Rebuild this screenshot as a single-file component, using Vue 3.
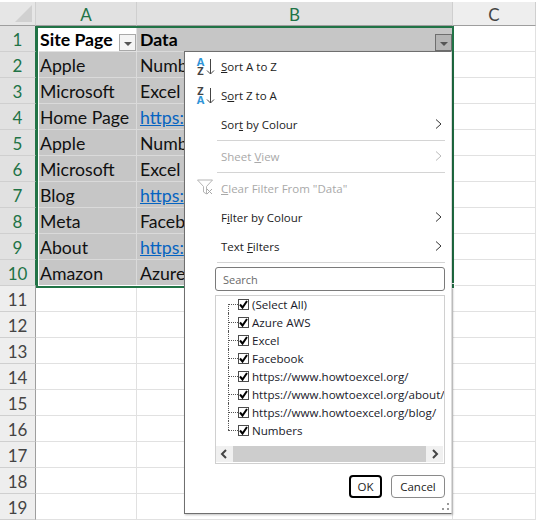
<script setup>
const rows = [
  ['Site Page', 'Data'], ['Apple', 'Numb'], ['Microsoft', 'Excel'],
  ['Home Page', 'https:'], ['Apple', 'Numb'], ['Microsoft', 'Excel'],
  ['Blog', 'https:'], ['Meta', 'Faceb'],
  ['About', 'https:'], ['Amazon', 'Azure'],
  ['', ''], ['', ''], ['', ''], ['', ''], ['', ''], ['', ''], ['', ''], ['', ''], ['', '']
]
const list = ['(Select All)', 'Azure AWS', 'Excel', 'Facebook', 'https://www.howtoexcel.org/',
  'https://www.howtoexcel.org/about/', 'https://www.howtoexcel.org/blog/', 'Numbers']
</script>

<template>
  <div class="sheet">
    <div class="top-strip"></div>
    <div class="grid">
      <div class="corner"><span class="tri"></span></div>
      <div class="col-h sel">A</div>
      <div class="col-h sel">B</div>
      <div class="col-h">C</div>
      <template v-for="(r, i) in rows" :key="i">
        <div class="row-h" :class="{ sel: i < 10 }">{{ i + 1 }}</div>
        <div class="cell" :class="{ picked: i > 0 && i < 10, active: i === 0, bold: i === 0 }">
          {{ r[0] }}
          <span v-if="i === 0" class="fbtn"><i class="caret"></i></span>
        </div>
        <div class="cell colb" :class="{ picked: i < 10, bold: i === 0, link: r[1].startsWith('http') }">
          <span>{{ r[1] }}</span>
          <span v-if="i === 0" class="fbtn dark"><i class="caret"></i></span>
        </div>
        <div class="cell"></div>
      </template>
    </div>
    <div class="selection"><span class="handle"></span></div>

    <div class="menu">
      <div class="item">
        <span class="sort-ic"><span class="letters"><b class="blue">A</b><b>Z</b></span>
          <svg width="9" height="17" viewBox="0 0 9 17"><path d="M4.5 1v15M1 12.5l3.5 3.5 3.5-3.5" fill="none" stroke="#444" stroke-width="1"/></svg></span>
        <span><u>S</u>ort A to Z</span>
      </div>
      <div class="item">
        <span class="sort-ic"><span class="letters"><b>Z</b><b class="blue">A</b></span>
          <svg width="9" height="17" viewBox="0 0 9 17"><path d="M4.5 1v15M1 12.5l3.5 3.5 3.5-3.5" fill="none" stroke="#444" stroke-width="1"/></svg></span>
        <span>S<u>o</u>rt Z to A</span>
      </div>
      <div class="item">
        <span>Sor<u>t</u> by Colour</span>
        <svg class="chev" width="7" height="10" viewBox="0 0 7 10"><path d="M1 .5 6 5 1 9.5" fill="none" stroke="#333"/></svg>
      </div>
      <div class="sep"></div>
      <div class="item off">
        <span>Sheet <u>V</u>iew</span>
        <svg class="chev" width="7" height="10" viewBox="0 0 7 10"><path d="M1 .5 6 5 1 9.5" fill="none" stroke="#bbb"/></svg>
      </div>
      <div class="sep"></div>
      <div class="item off">
        <svg class="funnel" width="17" height="16" viewBox="0 0 17 16"><path d="M.5 1h15L9.5 7.5V15L6.5 13V7.5z" fill="none" stroke="#b5b5b5"/><path d="M10 10l5 5M15 10l-5 5" stroke="#a8a8a8" fill="none"/></svg>
        <span><u>C</u>lear Filter From "Data"</span>
      </div>
      <div class="item">
        <span>F<u>i</u>lter by Colour</span>
        <svg class="chev" width="7" height="10" viewBox="0 0 7 10"><path d="M1 .5 6 5 1 9.5" fill="none" stroke="#333"/></svg>
      </div>
      <div class="item">
        <span>Text <u>F</u>ilters</span>
        <svg class="chev" width="7" height="10" viewBox="0 0 7 10"><path d="M1 .5 6 5 1 9.5" fill="none" stroke="#333"/></svg>
      </div>
      <div class="sep"></div>
      <div class="search">Search</div>
      <div class="listbox">
        <div class="entries">
          <div v-for="(t, i) in list" :key="t" class="entry">
            <span class="dots" :class="{ first: i === 0, last: i === list.length - 1 }"></span>
            <span class="check">
              <svg width="11" height="11" viewBox="0 0 11 11"><path d="M2 5.5 4.5 8.5 9 2" fill="none" stroke="#000" stroke-width="2"/></svg>
            </span>
            <span class="etext">{{ t }}</span>
          </div>
        </div>
        <div class="hbar">
          <svg width="17" height="16" viewBox="0 0 17 16"><path d="M10 4 6 8l4 4" fill="none" stroke="#444" stroke-width="2"/></svg>
          <span class="thumb"></span>
          <svg width="17" height="16" viewBox="0 0 17 16"><path d="M7 4l4 4-4 4" fill="none" stroke="#444" stroke-width="2"/></svg>
        </div>
      </div>
      <div class="actions">
        <span class="btn ok">OK</span>
        <span class="btn">Cancel</span>
      </div>
      <svg class="grip" width="9" height="9" viewBox="0 0 9 9" fill="#9a9a9a">
        <rect x="6" y="0" width="2" height="2"/><rect x="6" y="5" width="2" height="2"/><rect x="1" y="5" width="2" height="2"/>
      </svg>
    </div>
  </div>
</template>

<style>
html, body { margin: 0; background: #fff; }
</style>

<style scoped>
.sheet { position: relative; width: 536px; height: 521px; overflow: hidden; background: #fff; font-family: "Lato", "Liberation Sans", sans-serif; }
.top-strip { height: 2px; background: #fff; }
.grid { display: grid; grid-template-columns: 36px 101px 316px 83px; grid-template-rows: 24px repeat(19, 26px); }
.corner { background: #e6e6e6; border-right: 1px solid #d0d0d0; border-bottom: 1px solid #9e9e9e; box-sizing: border-box; position: relative; }
.tri { position: absolute; right: 3px; bottom: 3px; width: 0; height: 0; border-left: 17px solid transparent; border-bottom: 17px solid #d0d0d0; }
.col-h { background: #eeeeee; border-right: 1px solid #cfcfcf; border-bottom: 1px solid #9e9e9e; box-sizing: border-box; display: flex; align-items: center; justify-content: center; padding-top: 2px; font-size: 17px; color: #444; }
.col-h.sel { background: #e1e1e1; color: #217346; }
.row-h { background: #eeeeee; border-right: 1px solid #9e9e9e; border-bottom: 1px solid #cfcfcf; box-sizing: border-box; display: flex; align-items: center; justify-content: center; padding-top: 2px; font-size: 17px; color: #444; }
.row-h.sel { background: #e1e1e1; color: #217346; border-right-color: #217346; }
.cell { position: relative; box-sizing: border-box; border-right: 1px solid #e1e1e1; border-bottom: 1px solid #e1e1e1; display: flex; align-items: center; padding: 1px 0 0 4px; font-size: 17.7px; color: #111; white-space: nowrap; overflow: hidden; }
.cell.colb { padding-left: 3px; }
.cell.picked { background: #c6c6c6; border-color: #dadada; }
.cell.active { background: #fff; }
.cell.bold { font-weight: 700; color: #000; }
.cell.link span { color: #0563c1; text-decoration: underline; }
.bold:not(.active) { background: #c6c6c6; }
.fbtn { position: absolute; right: 0; bottom: 0; width: 17px; height: 17px; box-sizing: border-box; border: 1px solid #a9a9a9; background: #f4f4f4; display: flex; align-items: center; justify-content: center; }
.fbtn.dark { background: #b5b5b5; border-color: #6e6e6e; }
.caret { width: 0; height: 0; border-left: 4px solid transparent; border-right: 4px solid transparent; border-top: 4px solid #555; margin-top: 2px; }
.selection { position: absolute; left: 36px; top: 26px; width: 418px; height: 262px; box-sizing: border-box; border: 2px solid #217346; box-shadow: inset 1px 0 0 #fff, inset 0 -1px 0 #fff; pointer-events: none; }
.handle { position: absolute; right: -3px; bottom: -3px; width: 4px; height: 4px; background: #217346; border: 1px solid #fff; }

.menu { position: absolute; left: 184px; top: 51px; width: 268px; height: 463px; box-sizing: border-box; background: #fff; border: 1px solid #6f6f6f; border-right-color: #dcdcdc; padding-left: 0; font-family: "Open Sans", "Liberation Sans", sans-serif; font-size: 11.5px; color: #222; box-shadow: 1px 1px 2px rgba(0,0,0,.25); }
.item { height: 29px; display: flex; align-items: center; padding-left: 36px; position: relative; }
.item.off { color: #a9a9a9; }
.item u { display: inline-block; text-underline-offset: 1px; }
.chev { position: absolute; right: 9px; top: 9px; }
.sep { height: 1px; margin: 1px 6px 1px 32px; background: #d4d4d4; }
.sort-ic { position: absolute; left: 11px; top: 6px; display: flex; align-items: center; gap: 1px; }
.letters { display: flex; flex-direction: column; align-items: center; width: 9px; font-size: 11px; line-height: 8.5px; }
.letters b { font-weight: 700; color: #444; }
.letters b.blue { color: #2f94d8; }
.funnel { position: absolute; left: 12px; top: 5px; }
.search { margin: 4px 6px 0 30px; height: 24px; box-sizing: border-box; border: 1px solid #7a7a7a; border-radius: 3px; padding-left: 7px; display: flex; align-items: center; font-size: 11px; color: #6a6a6a; }
.listbox { margin: 4px 6px 0 30px; height: 169px; box-sizing: border-box; border: 1px solid #d0d0d0; display: flex; flex-direction: column; overflow: hidden; }
.entries { flex: 1; margin-top: -1px; font-size: 11.6px; }
.entry { height: 18px; display: flex; align-items: center; position: relative; padding-left: 22px; white-space: nowrap; }
.dots { position: absolute; left: 12px; top: 0; bottom: 0; width: 10px; }
.dots::before { content: ""; position: absolute; left: 0; top: 0; bottom: 0; border-left: 1px dotted #555; }
.dots::after { content: ""; position: absolute; left: 0; right: 0; top: 9px; border-top: 1px dotted #555; }
.dots.first::before { top: 9px; }
.dots.last::before { bottom: 9px; }
.check { width: 11px; height: 11px; box-sizing: border-box; border: 1px solid #4c4c4c; display: flex; align-items: center; justify-content: center; flex: none; }
.check svg { flex: none; }
.etext { margin-left: 3px; color: #1a1a2a; }
.hbar { height: 16px; margin: 0 1px 1px 0; background: #f0f0f0; display: flex; align-items: center; }
.thumb { flex: 1; height: 16px; background: #cdcdcd; }
.actions { display: flex; justify-content: flex-end; gap: 9px; margin: 11px 6px 0 0; }
.btn { box-sizing: border-box; width: 54px; height: 23px; border: 1px solid #8a8a8a; border-radius: 4px; display: flex; align-items: center; justify-content: center; color: #222; }
.btn.ok { width: 33px; border: 2px solid #000; }
.grip { position: absolute; right: 1px; bottom: 1px; }
</style>
